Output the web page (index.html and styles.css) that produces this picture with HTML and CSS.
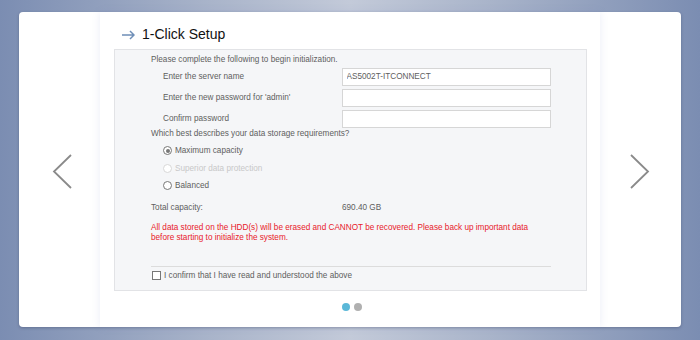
FILE: index.html
```html
<!DOCTYPE html>
<html lang="en">
<head>
    <meta charset="UTF-8">
    <title>1-Click Setup</title>
    <link rel="stylesheet" href="styles.css">
</head>
<body>
    <div class="card">
        <button class="nav-button prev">
            <svg width="20" height="35" viewBox="0 0 20 35"><path d="M19 1 L2 17.5 L19 34" fill="none" stroke="#8a8a8a" stroke-width="1.8"/></svg>
        </button>

        <div class="slide">
            <div class="title">
                <svg class="title-arrow" width="13" height="10" viewBox="0 0 13 10"><path d="M0 5 H12 M8 1 L12 5 L8 9" fill="none" stroke="#6f8fb8" stroke-width="1.5"/></svg>
                <span>1-Click Setup</span>
            </div>

            <div class="panel">
                <div class="intro">Please complete the following to begin initialization.</div>

                <div class="field-row">
                    <label>Enter the server name</label>
                    <input type="text" value="AS5002T-ITCONNECT">
                </div>
                <div class="field-row">
                    <label>Enter the new password for 'admin'</label>
                    <input type="password">
                </div>
                <div class="field-row">
                    <label>Confirm password</label>
                    <input type="password">
                </div>

                <div class="question">Which best describes your data storage requirements?</div>

                <div class="radio-list">
                    <div class="radio-item"><span class="radio checked"></span>Maximum capacity</div>
                    <div class="radio-item disabled"><span class="radio"></span>Superior data protection</div>
                    <div class="radio-item"><span class="radio"></span>Balanced</div>
                </div>

                <div class="capacity">
                    <span class="capacity-label">Total capacity:</span>
                    <span>690.40 GB</span>
                </div>

                <div class="warning">All data stored on the HDD(s) will be erased and CANNOT be recovered. Please back up important data before starting to initialize the system.</div>

                <div class="confirm">
                    <span class="checkbox"></span>I confirm that I have read and understood the above
                </div>
            </div>

            <div class="dots">
                <span class="dot active"></span>
                <span class="dot"></span>
            </div>
        </div>

        <button class="nav-button next">
            <svg width="20" height="35" viewBox="0 0 20 35"><path d="M1 1 L18 17.5 L1 34" fill="none" stroke="#8a8a8a" stroke-width="1.8"/></svg>
        </button>
    </div>
</body>
</html>
```

FILE: styles.css
```css
* {
    margin: 0;
    padding: 0;
    box-sizing: border-box;
}

body {
    width: 700px;
    height: 340px;
    overflow: hidden;
    background: linear-gradient(90deg, #7b8db2 0%, #a9b4ca 30%, #c3cad9 50%, #a9b4ca 70%, #7b8db2 100%);
    font-family: "Liberation Sans", Arial, sans-serif;
    padding: 12px 19px 13px;
}

.card {
    height: 315px;
    background-color: #fff;
    border-radius: 4px;
    box-shadow: 0 1px 3px rgba(40, 50, 80, 0.35);
    display: flex;
}

.nav-button {
    width: 81px;
    border: none;
    background: none;
    display: flex;
    align-items: center;
    justify-content: center;
    padding-top: 3px;
}

.nav-button.prev {
    padding-left: 5px;
}

.nav-button.next {
    padding-right: 1px;
}

.slide {
    width: 500px;
    padding: 0 13px 0 14px;
    box-shadow: 0 0 8px rgba(110, 130, 200, 0.14);
}

.title {
    height: 37px;
    display: flex;
    align-items: center;
    gap: 7px;
    padding: 6px 0 0 8px;
    font-size: 14px;
    color: #111;
}

.title-arrow {
    margin-top: 2px;
}

.panel {
    height: 242px;
    background-color: #f5f6f8;
    border: 1px solid #e2e3e6;
    padding: 4px 35px 0 36px;
    font-size: 8.2px;
    color: #5e5e5e;
}

.intro {
    height: 12px;
    line-height: 12px;
}

.field-row {
    display: flex;
    align-items: center;
    height: 21px;
}

.field-row label {
    width: 191px;
    padding-left: 12px;
}

.field-row input {
    width: 210px;
    height: 18px;
    border: 1px solid #d6d6d6;
    background-color: #fff;
    font-family: inherit;
    font-size: 8.2px;
    color: #5e5e5e;
    padding: 0 4px;
}

.question {
    height: 10px;
    line-height: 10px;
}

.radio-list {
    margin-top: 3px;
    padding-left: 12px;
}

.radio-item {
    display: flex;
    align-items: center;
    gap: 3px;
    height: 17.5px;
}

.radio-item.disabled {
    color: #c8c8c8;
}

.radio {
    width: 9px;
    height: 9px;
    border: 1px solid #777;
    border-radius: 50%;
    background-color: #fff;
    position: relative;
}

.radio-item.disabled .radio {
    border-color: #d8d8d8;
}

.radio.checked::after {
    content: "";
    position: absolute;
    left: 1.5px;
    top: 1.5px;
    width: 4px;
    height: 4px;
    border-radius: 50%;
    background-color: #777;
}

.capacity {
    display: flex;
    margin-top: 8px;
    height: 10px;
    line-height: 10px;
}

.capacity-label {
    width: 191px;
}

.warning {
    margin-top: 10px;
    color: #e8202a;
    line-height: 10.5px;
}

.confirm {
    margin-top: 22px;
    border-top: 1px solid #dcdcdc;
    padding-top: 4px;
    display: flex;
    align-items: center;
    gap: 3px;
    line-height: 10px;
}

.checkbox {
    width: 9px;
    height: 9px;
    border: 1px solid #777;
    background-color: #fff;
    margin-left: 1px;
}

.dots {
    display: flex;
    gap: 4px;
    padding: 12px 0 0 228px;
}

.dot {
    width: 8px;
    height: 8px;
    border-radius: 50%;
    background-color: #b0b0b0;
}

.dot.active {
    background-color: #5bb8d8;
}
```
